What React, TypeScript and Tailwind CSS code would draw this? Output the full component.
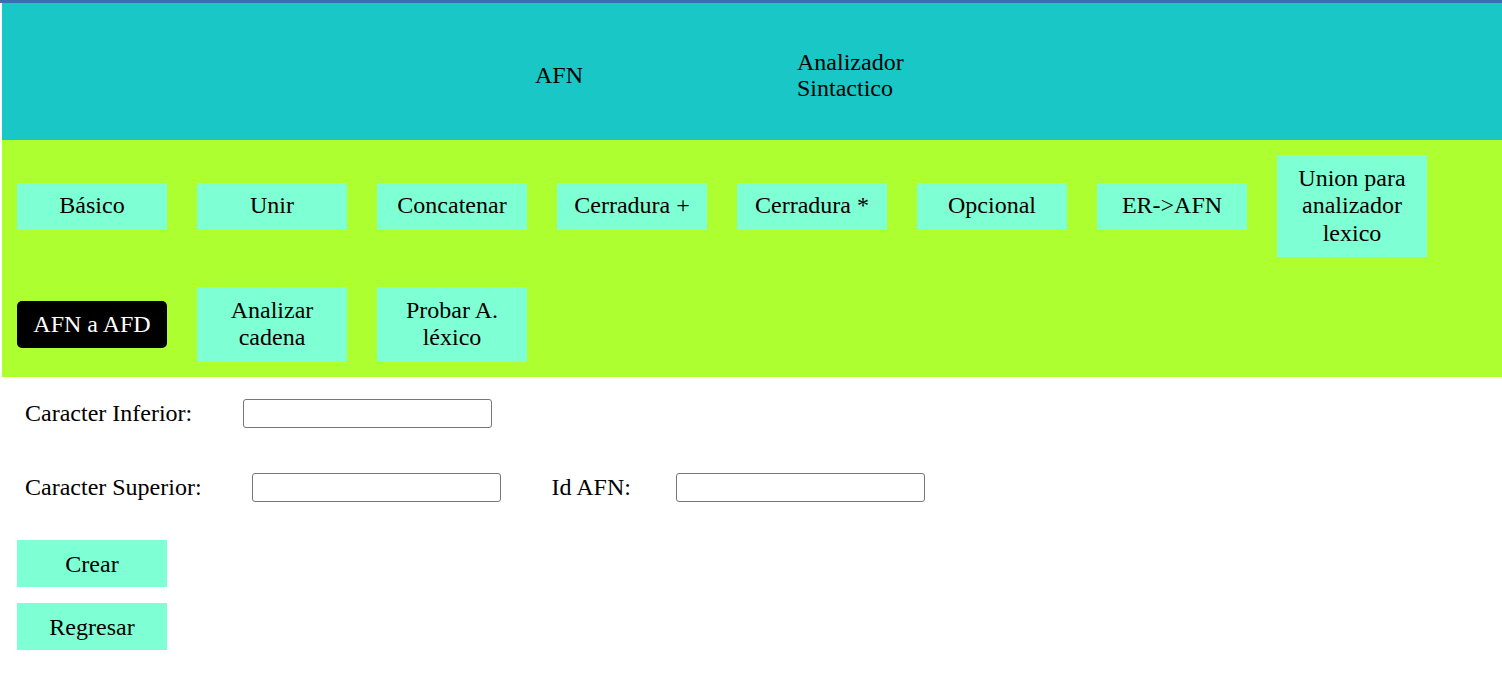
const botones = [
  "Básico",
  "Unir",
  "Concatenar",
  "Cerradura +",
  "Cerradura *",
  "Opcional",
  "ER->AFN",
  "Union para analizador lexico",
];

function Boton({ texto, oscuro }: { texto: string; oscuro?: boolean }) {
  return (
    <button
      className={
        oscuro
          ? "w-[150px] py-[9.75px] px-2 m-[15px] bg-black text-white rounded-[5px] text-[24px] leading-[27.5px]"
          : "w-[150px] py-[9.75px] px-2 m-[15px] bg-[#7fffd4] text-black text-[24px] leading-[27.5px]"
      }
    >
      {texto}
    </button>
  );
}

function Campo({ label, gap }: { label: string; gap: string }) {
  return (
    <>
      <span className="text-[24px]">{label}</span>
      <input
        type="text"
        className={`${gap} w-[249px] h-[29px] border border-[#767676] rounded-[3px] bg-white`}
      />
    </>
  );
}

export default function App() {
  return (
    <div className="min-h-[698px] bg-white text-black font-[family-name:Liberation_Serif,serif]">
      <div className="h-[3px] bg-[#3b6cb4]" />
      <div className="ml-[2px]">
        {/* encabezado */}
        <div className="h-[137px] bg-[#19c7c6] flex items-center pl-[533px] pt-[6px] text-[24px] leading-[26px]">
          <div className="w-[262px]">AFN</div>
          <div className="w-[120px]">
            Analizador
            <br />
            Sintactico
          </div>
        </div>

        {/* menu de operaciones */}
        <div className="bg-[#adff2f] h-[237px]">
          <div className="flex items-center">
            {botones.map((b) => (
              <Boton key={b} texto={b} />
            ))}
          </div>
          <div className="flex items-center">
            <Boton texto="AFN a AFD" oscuro />
            <Boton texto="Analizar cadena" />
            <Boton texto="Probar A. léxico" />
          </div>
        </div>

        {/* formulario */}
        <div className="pl-[23px] pt-[22px] leading-[29px]">
          <div className="flex items-center">
            <Campo label="Caracter Inferior:" gap="ml-[51px]" />
          </div>
          <div className="flex items-center mt-[45px]">
            <Campo label="Caracter Superior:" gap="ml-[50px]" />
            <span className="ml-[51px] text-[24px]">Id AFN:</span>
            <input
              type="text"
              className="ml-[45px] w-[249px] h-[29px] border border-[#767676] rounded-[3px] bg-white"
            />
          </div>
        </div>
        <div className="flex flex-col items-start pl-[15px] pt-[38px] gap-[16px]">
          <button className="w-[150px] h-[47px] bg-[#7fffd4] text-[24px]">Crear</button>
          <button className="w-[150px] h-[47px] bg-[#7fffd4] text-[24px]">Regresar</button>
        </div>
      </div>
    </div>
  );
}
